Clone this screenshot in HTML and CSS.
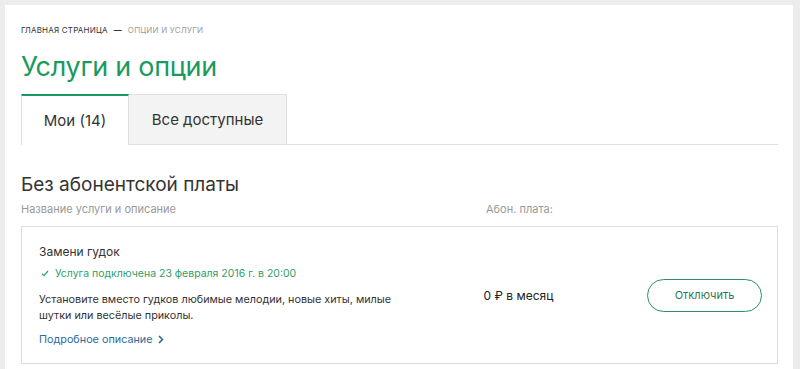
FILE: index.html
```html
<!DOCTYPE html>
<html lang="ru">
<head>
<meta charset="utf-8">
<link rel="stylesheet" href="styles.css">
</head>
<body>
<div class="panel">
  <div class="crumbs"><span class="crumb-home">Главная страница</span><span class="crumb-dash">—</span><span class="crumb-cur">Опции и услуги</span></div>
  <h1 class="title">Услуги и опции</h1>
  <div class="tabs">
    <div class="tab tab-active">Мои (14)</div>
    <div class="tab tab-idle">Все доступные</div>
    <div class="tab-rest"></div>
  </div>
  <h2 class="section">Без абонентской платы</h2>
  <div class="cols">
    <div class="col-name">Название услуги и описание</div>
    <div class="col-fee">Абон. плата:</div>
  </div>
  <div class="card">
    <div class="card-main">
      <div class="svc-name">Замени гудок</div>
      <div class="svc-status"><svg class="check" width="8" height="7" viewBox="0 0 8 7"><path d="M1 3.8 L3 5.6 L7 1" fill="none" stroke="#2f9d6a" stroke-width="1.2"/></svg>Услуга подключена 23 февраля 2016 г. в 20:00</div>
      <div class="svc-desc">Установите вместо гудков любимые мелодии, новые хиты, милые шутки или весёлые приколы.</div>
      <a class="svc-more">Подробное описание <svg class="chev" width="6" height="9" viewBox="0 0 6 9"><path d="M1 1 L4.5 4.5 L1 8" fill="none" stroke="#2d6b99" stroke-width="1.6"/></svg></a>
    </div>
    <div class="card-fee">0 ₽ в месяц</div>
    <div class="card-act"><button class="btn">Отключить</button></div>
  </div>
</div>
</body>
</html>
```

FILE: styles.css
```css
* { box-sizing: border-box; }
html, body { margin: 0; padding: 0; }
body {
  background: #ececec;
  font-family: Inter, "Noto Sans", sans-serif;
  color: #333;
  padding: 5px 7px 0 5px;
  height: 369px;
  overflow: hidden;
}
.panel {
  background: #fff;
  height: 380px;
  padding: 20px 15px 0 16px;
}
.crumbs {
  font-size: 8px;
  text-transform: uppercase;
  letter-spacing: 0.2px;
  line-height: 10px;
  display: flex;
  gap: 6px;
}
.crumb-home { color: #333; }
.crumb-dash { color: #333; font-weight: 700; }
.crumb-cur { color: #999; }
.title {
  margin: 15px 0 0 0;
  font-size: 27px;
  font-weight: 400;
  color: #1b9a5f;
  line-height: 34px;
  letter-spacing: -0.3px;
}
.tabs {
  display: flex;
  margin-top: 10px;
  height: 51px;
}
.tab {
  display: flex;
  align-items: center;
  justify-content: center;
  font-size: 15px;
  color: #333;
}
.tab-active {
  width: 108px;
  border-top: 2px solid #1b9a5f;
  border-left: 1px solid #e0e0e0;
  border-right: 1px solid #e0e0e0;
  background: #fff;
}
.tab-idle {
  width: 158px;
  background: #f3f3f3;
  border: 1px solid #e0e0e0;
  border-left: none;
}
.tab-rest {
  flex: 1;
  border-bottom: 1px solid #e0e0e0;
}
.section {
  margin: 28px 0 0 0;
  font-size: 19px;
  font-weight: 400;
  color: #333;
  line-height: 24px;
}
.cols {
  display: flex;
  font-size: 11px;
  color: #999;
  margin-top: 5px;
  line-height: 14px;
}
.col-name { width: 465px; }
.card {
  margin-top: 10px;
  border: 1px solid #ddd;
  display: flex;
  align-items: center;
  height: 138px;
  padding: 0 15px 0 17px;
}
.card-main { width: 446px; }
.svc-name { font-size: 12px; color: #333; line-height: 16px; }
.svc-status {
  margin-top: 7px;
  font-size: 10.5px;
  color: #2f9d6a;
  line-height: 14px;
  display: flex;
  align-items: center;
}
.check { margin: 0 6px 0 2px; }
.svc-desc {
  margin-top: 11px;
  font-size: 10.8px;
  line-height: 16px;
  color: #333;
  width: 380px;
}
.svc-more {
  display: inline-flex;
  align-items: center;
  gap: 5px;
  margin-top: 9px;
  font-size: 10.8px;
  color: #2d6b99;
  line-height: 14px;
}
.card-fee { width: 164px; font-size: 12px; color: #222; }
.card-act { flex: 1; display: flex; justify-content: flex-end; }
.btn {
  width: 115px;
  height: 33px;
  border: 1px solid #2e8f63;
  border-radius: 17px;
  background: #fff;
  font-family: Inter, "Noto Sans", sans-serif;
  font-size: 11px;
  color: #2a7a55;
}
```
